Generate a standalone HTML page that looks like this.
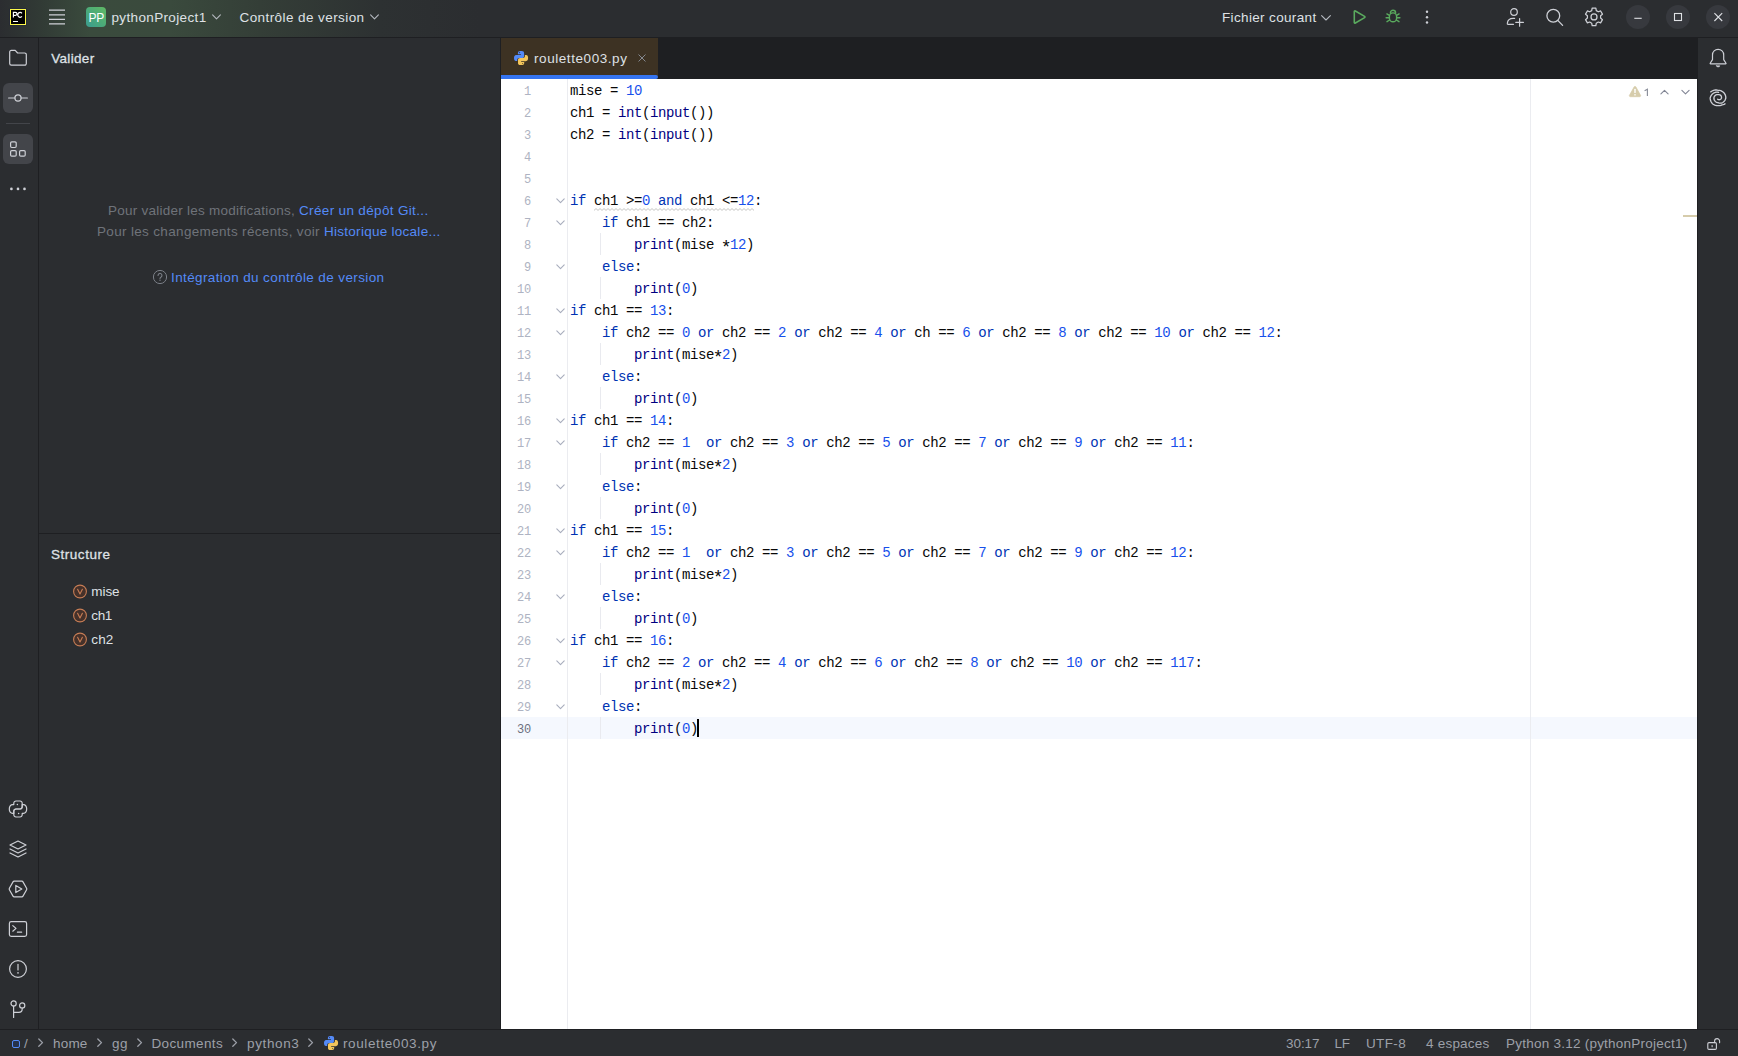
<!DOCTYPE html>
<html>
<head>
<meta charset="utf-8">
<title>pythonProject1 – roulette003.py</title>
<style>
*{box-sizing:border-box;margin:0;padding:0}
html,body{width:1738px;height:1056px;overflow:hidden;background:#2b2d30;font-family:"Liberation Sans",sans-serif}
body{font-family:"Liberation Sans",sans-serif;font-size:13px;color:#dfe1e5;position:relative}
svg{position:absolute;overflow:visible}
.tx{position:absolute;white-space:pre;line-height:16px;height:16px}
/* title bar */
#title{position:absolute;left:0;top:0;width:1738px;height:37px;background:linear-gradient(90deg,#2b2d30 0px,#313a35 40px,#3a4b3d 90px,#3a4a3d 170px,#343e37 260px,#2d3132 380px,#2b2d30 480px)}
#titleborder{position:absolute;left:0;top:37px;width:1738px;height:1px;background:#1e1f22}
/* left stripe */
#lstripe{position:absolute;left:0;top:38px;width:38px;height:991px;background:#2b2d30}
#lstripeborder{position:absolute;left:38px;top:38px;width:1px;height:991px;background:#1e1f22}
.sbtn{position:absolute;left:3px;width:30px;height:30px;border-radius:6px;background:#43454a}
/* left panel */
#lpanel{position:absolute;left:39px;top:38px;width:461px;height:991px;background:#2b2d30}
#lpanelborder{position:absolute;left:500px;top:38px;width:1px;height:991px;background:#1e1f22}
#lsplit{position:absolute;left:39px;top:533px;width:461px;height:1px;background:#1e1f22}
/* editor */
#tabbar{position:absolute;left:501px;top:38px;width:1196px;height:41px;background:#1e1f22}
#tab{position:absolute;left:501px;top:38px;width:157px;height:38px;background:#3d3223}
#tabline{position:absolute;left:501px;top:75px;width:157px;height:4px;background:#3574f0;border-radius:0 2px 2px 0}
#editor{position:absolute;left:501px;top:79px;width:1196px;height:950px;background:#ffffff}
#gutterline{position:absolute;left:567px;top:79px;width:1px;height:950px;background:#ebecf0}
#marginline{position:absolute;left:1530px;top:79px;width:1px;height:950px;background:#ebecf0}
#curline{position:absolute;left:501px;top:717px;width:1196px;height:22px;background:#f5f8fe}
#caret{position:absolute;left:697px;top:719px;width:2px;height:18px;background:#000}
.ln{position:absolute;left:501px;padding-top:2px;width:30px;text-align:right;font-family:"Liberation Mono",monospace;font-size:12px;letter-spacing:-0.2px;line-height:22px;height:22px;color:#aeb3c2;white-space:pre}
.cl{position:absolute;left:570px;font-family:"Liberation Mono",monospace;font-size:14px;letter-spacing:-0.4px;line-height:22px;height:22px;color:#080808;white-space:pre;padding-top:1px}
.as{position:relative;top:4px;font-size:18px;line-height:0;letter-spacing:0;margin:0 -1.4px}.k{color:#0033b3}.n{color:#1750eb}.b{color:#000080}
.ig{position:absolute;left:600px;width:1px;height:22px;background:#e9eaef}
/* right stripe */
#rstripe{position:absolute;left:1697px;top:38px;width:41px;height:991px;background:#2b2d30}
#rstripeborder{position:absolute;left:1697px;top:38px;width:1px;height:991px;background:#1e1f22}
/* status bar */
#status{position:absolute;left:0;top:1030px;width:1738px;height:26px;background:#2b2d30}
#statusborder{position:absolute;left:0;top:1029px;width:1738px;height:1px;background:#1e1f22}
</style>
</head>
<body>
<div id="title"></div>
<div id="titleborder"></div>
<div id="lstripe"></div>
<div id="lstripeborder"></div>
<div id="lpanel"></div>
<div id="lpanelborder"></div>
<div id="lsplit"></div>
<div id="tabbar"></div>
<div id="tab"></div>
<div id="tabline"></div>
<div id="editor"></div>
<div id="curline"></div>
<div id="gutterline"></div>
<div id="marginline"></div>
<div id="rstripe"></div>
<div id="rstripeborder"></div>
<div id="status"></div>
<div id="statusborder"></div>
<!-- title -->
<!-- PyCharm logo -->
<div style="position:absolute;left:10px;top:9px;width:16px;height:16px;background:#000;border:1px solid #fcf84a;box-shadow:0 0 0 0.5px #21253a"></div>
<svg style="left:10px;top:9px" width="16" height="16" viewBox="0 0 16 16" fill="none" stroke="#fff" stroke-width="1.15"><path d="M3.4 8.4 V3.3 H5.4 a1.55 1.55 0 0 1 0 3.1 H3.4"/><path d="M11.9 4.3 a2.3 2.5 0 1 0 0 3.1"/></svg>
<div style="position:absolute;left:13px;top:21px;width:5px;height:1px;background:#fff"></div>
<!-- hamburger -->
<svg style="left:49px;top:8px" width="16" height="18" viewBox="0 0 16 18"><path d="M0 2.2H16M0 6.8H16M0 11.3H16M0 15.8H16" stroke="#ced0d6" stroke-width="1.3" fill="none"/></svg>
<!-- project icon -->
<div style="position:absolute;left:86px;top:7px;width:20px;height:20px;border-radius:4px;background:linear-gradient(45deg,#3a9c90 0%,#4cab78 50%,#60b964 100%)"></div>
<!-- chevrons -->
<svg style="left:212px;top:14px" width="9" height="6" viewBox="0 0 9 6"><path d="M0.6 0.8 L4.5 4.8 L8.4 0.8" fill="none" stroke="#b4b8bf" stroke-width="1.1" stroke-linecap="round" stroke-linejoin="round"/></svg>
<svg style="left:370px;top:14px" width="9" height="6" viewBox="0 0 9 6"><path d="M0.6 0.8 L4.5 4.8 L8.4 0.8" fill="none" stroke="#b4b8bf" stroke-width="1.1" stroke-linecap="round" stroke-linejoin="round"/></svg>
<svg style="left:1321px;top:15px" width="10" height="6" viewBox="0 0 10 6"><path d="M0.6 0.6 L5 5 L9.4 0.6" fill="none" stroke="#b4b8bf" stroke-width="1.1" stroke-linecap="round" stroke-linejoin="round"/></svg>
<!-- run -->
<svg style="left:1351px;top:9px" width="16" height="16" viewBox="0 0 16 16"><path d="M3.3 2.6 V13.4 a0.7 0.7 0 0 0 1.05 .6 L13.6 8.6 a0.7 0.7 0 0 0 0 -1.2 L4.35 2 a0.7 0.7 0 0 0 -1.05 .6Z" fill="none" stroke="#5aaa5e" stroke-width="1.6" stroke-linejoin="round"/></svg>
<!-- debug -->
<svg style="left:1385px;top:8.3px" width="16" height="16" viewBox="0 0 16 16" fill="none" stroke="#5aaa5e" stroke-width="1.4" stroke-linecap="round" stroke-linejoin="round">
<path d="M5.4 4.9 a2.6 2.6 0 0 1 5.2 0"/>
<rect x="4.4" y="4.9" width="7.2" height="8.9" rx="3.6"/>
<path d="M4.4 7.4 L1.9 5.9M4.4 9.7H1.1M4.6 12 L2 13.7M11.6 7.4 L14.1 5.9M11.6 9.7H14.9M11.4 12 L14 13.7"/>
</svg>
<!-- kebab -->
<svg style="left:1425px;top:10px" width="4" height="14" viewBox="0 0 4 14"><circle cx="2" cy="1.8" r="1.2" fill="#ced0d6"/><circle cx="2" cy="7.2" r="1.2" fill="#ced0d6"/><circle cx="2" cy="12.5" r="1.2" fill="#ced0d6"/></svg>
<!-- add user -->
<svg style="left:1505px;top:7px" width="20" height="20" viewBox="0 0 20 20" fill="none" stroke="#ced0d6" stroke-width="1.2" stroke-linecap="round" stroke-linejoin="round">
<circle cx="9" cy="5" r="3.3"/>
<path d="M9.6 11.4 H8.2 C4.8 11.4 2.6 13.6 2.3 16.4 C2.2 17 2.5 17.3 3 17.3 H8.5"/>
<path d="M14.6 11.6V19.2M10.8 15.4H18.4"/>
</svg>
<!-- search -->
<svg style="left:1544px;top:7px" width="20" height="20" viewBox="0 0 20 20" fill="none" stroke="#ced0d6" stroke-width="1.3" stroke-linecap="round"><circle cx="9.3" cy="8.7" r="6.4"/><path d="M14 13.6 L18.6 18.4"/></svg>
<!-- gear -->
<svg style="left:1584px;top:7px" width="20" height="20" viewBox="0 0 20 20" fill="none" stroke="#ced0d6" stroke-width="1.25" stroke-linejoin="round"><path d="M7.71 3.60 L8.15 1.19 L11.85 1.19 L12.29 3.60 L14.31 4.77 L16.61 3.94 L18.46 7.15 L16.60 8.74 L16.60 11.06 L18.46 12.65 L16.61 15.86 L14.31 15.03 L12.29 16.20 L11.85 18.61 L8.15 18.61 L7.71 16.20 L5.69 15.03 L3.39 15.86 L1.54 12.65 L3.40 11.06 L3.40 8.74 L1.54 7.15 L3.39 3.94 L5.69 4.77Z"/><circle cx="10" cy="9.9" r="3"/></svg>
<!-- window buttons -->
<div style="position:absolute;left:1626px;top:5px;width:24px;height:24px;border-radius:12px;background:#37393e"></div>
<div style="position:absolute;left:1666px;top:5px;width:24px;height:24px;border-radius:12px;background:#37393e"></div>
<div style="position:absolute;left:1706px;top:5px;width:24px;height:24px;border-radius:12px;background:#37393e"></div>
<svg style="left:1626px;top:5px" width="24" height="24" viewBox="0 0 24 24"><path d="M8.3 13.3H15.7" stroke="#dfe1e5" stroke-width="1.1"/></svg>
<svg style="left:1666px;top:5px" width="24" height="24" viewBox="0 0 24 24"><rect x="8.5" y="8.5" width="7" height="7" fill="none" stroke="#dfe1e5" stroke-width="1.1"/></svg>
<svg style="left:1706px;top:5px" width="24" height="24" viewBox="0 0 24 24"><path d="M8.4 8.2 L16.2 16 M16.2 8.2 L8.4 16" stroke="#dfe1e5" stroke-width="1.1"/></svg>
<!-- lstripe -->
<!-- folder -->
<svg style="left:9px;top:49px" width="18" height="18" viewBox="0 0 18 18" fill="none" stroke="#ced0d6" stroke-width="1.2" stroke-linejoin="round"><path d="M0.7 3 a1.6 1.6 0 0 1 1.6 -1.6 H6.2 L8.6 4 H15.7 a1.6 1.6 0 0 1 1.6 1.6 V14.6 a1.6 1.6 0 0 1 -1.6 1.6 H2.3 a1.6 1.6 0 0 1 -1.6 -1.6Z"/></svg>
<!-- commit (selected) -->
<div class="sbtn" style="top:83px"></div>
<svg style="left:8px;top:90px" width="20" height="16" viewBox="0 0 20 16" fill="none" stroke="#ced0d6" stroke-width="1.2" stroke-linecap="round"><circle cx="10" cy="8" r="3.1"/><path d="M0.6 8H6.9M13.1 8H19.4"/></svg>
<div style="position:absolute;left:6px;top:123px;width:24px;height:1px;background:#43454a"></div>
<!-- structure (selected) -->
<div class="sbtn" style="top:134px"></div>
<svg style="left:9px;top:140px" width="18" height="18" viewBox="0 0 18 18" fill="none" stroke="#ced0d6" stroke-width="1.2" stroke-linejoin="round"><rect x="1.6" y="1.9" width="5.6" height="5.6" rx="1.2"/><rect x="1.6" y="10.6" width="5.6" height="5.6" rx="1.2"/><rect x="10.6" y="10.6" width="5.6" height="5.6" rx="1.2"/></svg>
<!-- more -->
<svg style="left:9px;top:186px" width="18" height="6" viewBox="0 0 18 6"><circle cx="2.4" cy="2.9" r="1.35" fill="#ced0d6"/><circle cx="9" cy="2.9" r="1.35" fill="#ced0d6"/><circle cx="15.5" cy="2.9" r="1.35" fill="#ced0d6"/></svg>
<!-- python console -->
<svg style="left:8px;top:799px" width="20" height="20" viewBox="0 0 20 20" fill="none" stroke="#ced0d6" stroke-width="1.2" stroke-linecap="round" stroke-linejoin="round">
<path d="M5.8 5.6 V4.2 A2.2 2.2 0 0 1 8 2 H12 A2.2 2.2 0 0 1 14.2 4.2 V7.8 A2.2 2.2 0 0 1 12 10 H8 A2.2 2.2 0 0 0 5.8 12.2 V14.4 H4.6 C2.6 14.4 1.3 12.7 1.3 10 C1.3 7.3 2.6 5.6 4.6 5.6Z"/><path d="M5.8 5.6 V4.2 A2.2 2.2 0 0 1 8 2 H12 A2.2 2.2 0 0 1 14.2 4.2 V7.8 A2.2 2.2 0 0 1 12 10 H8 A2.2 2.2 0 0 0 5.8 12.2 V14.4 H4.6 C2.6 14.4 1.3 12.7 1.3 10 C1.3 7.3 2.6 5.6 4.6 5.6Z" transform="rotate(180 10 10)"/>
<circle cx="9.4" cy="5.4" r="0.75" fill="#ced0d6" stroke="none"/><circle cx="10.6" cy="14.6" r="0.75" fill="#ced0d6" stroke="none"/>
</svg>
<!-- layers (packages) -->
<svg style="left:8px;top:839px" width="20" height="20" viewBox="0 0 20 20" fill="none" stroke="#ced0d6" stroke-width="1.2" stroke-linejoin="round" stroke-linecap="round">
<path d="M10 2 L18 6 L10 10 L2 6Z"/><path d="M2 10 L10 14 L18 10"/><path d="M2 14 L10 18 L18 14"/>
</svg>
<!-- services -->
<svg style="left:8px;top:879px" width="20" height="20" viewBox="0 0 20 20" fill="none" stroke="#ced0d6" stroke-width="1.2" stroke-linejoin="round">
<path d="M6.2 2.2 H13.8 a1.4 1.4 0 0 1 1.2 .7 L18.6 9.3 a1.4 1.4 0 0 1 0 1.4 L15 17.1 a1.4 1.4 0 0 1 -1.2 .7 H6.2 a1.4 1.4 0 0 1 -1.2 -.7 L1.4 10.7 a1.4 1.4 0 0 1 0 -1.4 L5 2.9 a1.4 1.4 0 0 1 1.2 -.7Z"/>
<path d="M7.8 6.4 V13.6 L13.8 10Z"/>
</svg>
<!-- terminal -->
<svg style="left:8px;top:919px" width="20" height="20" viewBox="0 0 20 20" fill="none" stroke="#ced0d6" stroke-width="1.2" stroke-linejoin="round" stroke-linecap="round">
<rect x="1.4" y="2.6" width="17.2" height="14.8" rx="1.8"/><path d="M4.8 6.6 L8 9.4 L4.8 12.2"/><path d="M9.4 13.2H13.6"/>
</svg>
<!-- problems -->
<svg style="left:8px;top:959px" width="20" height="20" viewBox="0 0 20 20" fill="none" stroke="#ced0d6" stroke-width="1.2" stroke-linecap="round">
<circle cx="10" cy="10" r="8.4"/><path d="M10 5.4V11"/><circle cx="10" cy="13.9" r="0.8" fill="#ced0d6" stroke="none"/>
</svg>
<!-- git -->
<svg style="left:8px;top:998px" width="20" height="22" viewBox="0 0 20 22" fill="none" stroke="#ced0d6" stroke-width="1.2" stroke-linecap="round">
<circle cx="5.6" cy="5.5" r="2.6"/><circle cx="14.2" cy="7.4" r="2.6"/><path d="M5.6 8.1V19.4"/><path d="M14.2 10 V11 a3.4 3.4 0 0 1 -3.4 3.4 H5.6"/>
</svg>
<!-- lpanel -->
<!-- help icon -->
<svg style="left:152px;top:269px" width="16" height="16" viewBox="0 0 16 16" fill="none"><circle cx="8" cy="8" r="6.6" stroke="#7b7f87" stroke-width="1"/><path d="M6.05 6.4 A1.95 1.95 0 1 1 9.15 7.95 C8.4 8.45 8 8.8 8 9.6" stroke="#7b7f87" stroke-width="1.1" stroke-linecap="round"/><circle cx="8" cy="11.2" r="0.7" fill="#7b7f87"/></svg>
<!-- structure items -->
<svg style="left:72px;top:583.5px" width="16" height="16" viewBox="0 0 16 16" fill="none"><circle cx="8" cy="7.5" r="6.4" stroke="#c77d55" stroke-width="1.1" fill="#45312a"/><path d="M5.6 5.2 L8 10 L10.4 5.2" stroke="#c77d55" stroke-width="1.1" stroke-linecap="round" stroke-linejoin="round"/></svg>
<svg style="left:72px;top:607.5px" width="16" height="16" viewBox="0 0 16 16" fill="none"><circle cx="8" cy="7.5" r="6.4" stroke="#c77d55" stroke-width="1.1" fill="#45312a"/><path d="M5.6 5.2 L8 10 L10.4 5.2" stroke="#c77d55" stroke-width="1.1" stroke-linecap="round" stroke-linejoin="round"/></svg>
<svg style="left:72px;top:631.5px" width="16" height="16" viewBox="0 0 16 16" fill="none"><circle cx="8" cy="7.5" r="6.4" stroke="#c77d55" stroke-width="1.1" fill="#45312a"/><path d="M5.6 5.2 L8 10 L10.4 5.2" stroke="#c77d55" stroke-width="1.1" stroke-linecap="round" stroke-linejoin="round"/></svg>
<!-- tab -->
<svg style="left:514px;top:51px" width="14.1" height="14.1" viewBox="0 0 14.1 14.1"><path d="M3.9 2.2 C3.9 0.8 4.7 0 6.2 0 H7.9 C9.3 0 10.1 0.8 10.1 2.2 V5 C10.1 6.3 9.3 7.05 8 7.05 H5.2 C3.9 7.05 3.2 7.8 3.2 9 V10 H2 C0.7 10 0 8.8 0 7 C0 5.2 0.7 3.9 2.2 3.9 H6.95 V3.2 H3.9Z" fill="#548af7"/>
<circle cx="5.5" cy="1.55" r="0.6" fill="#2a3a66"/>
<path transform="rotate(180 7.05 7.05)" d="M3.9 2.2 C3.9 0.8 4.7 0 6.2 0 H7.9 C9.3 0 10.1 0.8 10.1 2.2 V5 C10.1 6.3 9.3 7.05 8 7.05 H5.2 C3.9 7.05 3.2 7.8 3.2 9 V10 H2 C0.7 10 0 8.8 0 7 C0 5.2 0.7 3.9 2.2 3.9 H6.95 V3.2 H3.9Z" fill="#f2c55c"/>
<circle cx="8.6" cy="12.55" r="0.6" fill="#6e5a2a"/>
</svg>
<svg style="left:638px;top:54px" width="8" height="8" viewBox="0 0 8 8"><path d="M0.8 0.8 L7.2 7.2 M7.2 0.8 L0.8 7.2" stroke="#868a91" stroke-width="1" stroke-linecap="round"/></svg>
<!-- code -->
<div class="ln" style="top:79px">1</div>
<div class="cl" style="top:79px">mise = <span class="n">10</span></div>
<div class="ln" style="top:101px">2</div>
<div class="cl" style="top:101px">ch1 = <span class="b">int</span>(<span class="b">input</span>())</div>
<div class="ln" style="top:123px">3</div>
<div class="cl" style="top:123px">ch2 = <span class="b">int</span>(<span class="b">input</span>())</div>
<div class="ln" style="top:145px">4</div>
<div class="ln" style="top:167px">5</div>
<div class="ln" style="top:189px">6</div>
<div class="cl" style="top:189px"><span class="k">if</span> ch1 &gt;=<span class="n">0</span> <span class="k">and</span> ch1 &lt;=<span class="n">12</span>:</div>
<svg style="left:556px;top:197px" width="9" height="8" viewBox="0 0 9 8"><path d="M0.8 1.8 L4.5 5.6 L8.2 1.8" fill="none" stroke="#a8adbd" stroke-width="1.1" stroke-linecap="round" stroke-linejoin="round"/></svg>
<div class="ln" style="top:211px">7</div>
<div class="cl" style="top:211px">    <span class="k">if</span> ch1 == ch2:</div>
<svg style="left:556px;top:219px" width="9" height="8" viewBox="0 0 9 8"><path d="M0.8 1.8 L4.5 5.6 L8.2 1.8" fill="none" stroke="#a8adbd" stroke-width="1.1" stroke-linecap="round" stroke-linejoin="round"/></svg>
<div class="ln" style="top:233px">8</div>
<div class="cl" style="top:233px">        <span class="b">print</span>(mise <span class="as">*</span><span class="n">12</span>)</div>
<div class="ig" style="top:233px"></div>
<div class="ln" style="top:255px">9</div>
<div class="cl" style="top:255px">    <span class="k">else</span>:</div>
<svg style="left:556px;top:263px" width="9" height="8" viewBox="0 0 9 8"><path d="M0.8 1.8 L4.5 5.6 L8.2 1.8" fill="none" stroke="#a8adbd" stroke-width="1.1" stroke-linecap="round" stroke-linejoin="round"/></svg>
<div class="ln" style="top:277px">10</div>
<div class="cl" style="top:277px">        <span class="b">print</span>(<span class="n">0</span>)</div>
<div class="ig" style="top:277px"></div>
<div class="ln" style="top:299px">11</div>
<div class="cl" style="top:299px"><span class="k">if</span> ch1 == <span class="n">13</span>:</div>
<svg style="left:556px;top:307px" width="9" height="8" viewBox="0 0 9 8"><path d="M0.8 1.8 L4.5 5.6 L8.2 1.8" fill="none" stroke="#a8adbd" stroke-width="1.1" stroke-linecap="round" stroke-linejoin="round"/></svg>
<div class="ln" style="top:321px">12</div>
<div class="cl" style="top:321px">    <span class="k">if</span> ch2 == <span class="n">0</span> <span class="k">or</span> ch2 == <span class="n">2</span> <span class="k">or</span> ch2 == <span class="n">4</span> <span class="k">or</span> ch == <span class="n">6</span> <span class="k">or</span> ch2 == <span class="n">8</span> <span class="k">or</span> ch2 == <span class="n">10</span> <span class="k">or</span> ch2 == <span class="n">12</span>:</div>
<svg style="left:556px;top:329px" width="9" height="8" viewBox="0 0 9 8"><path d="M0.8 1.8 L4.5 5.6 L8.2 1.8" fill="none" stroke="#a8adbd" stroke-width="1.1" stroke-linecap="round" stroke-linejoin="round"/></svg>
<div class="ln" style="top:343px">13</div>
<div class="cl" style="top:343px">        <span class="b">print</span>(mise<span class="as">*</span><span class="n">2</span>)</div>
<div class="ig" style="top:343px"></div>
<div class="ln" style="top:365px">14</div>
<div class="cl" style="top:365px">    <span class="k">else</span>:</div>
<svg style="left:556px;top:373px" width="9" height="8" viewBox="0 0 9 8"><path d="M0.8 1.8 L4.5 5.6 L8.2 1.8" fill="none" stroke="#a8adbd" stroke-width="1.1" stroke-linecap="round" stroke-linejoin="round"/></svg>
<div class="ln" style="top:387px">15</div>
<div class="cl" style="top:387px">        <span class="b">print</span>(<span class="n">0</span>)</div>
<div class="ig" style="top:387px"></div>
<div class="ln" style="top:409px">16</div>
<div class="cl" style="top:409px"><span class="k">if</span> ch1 == <span class="n">14</span>:</div>
<svg style="left:556px;top:417px" width="9" height="8" viewBox="0 0 9 8"><path d="M0.8 1.8 L4.5 5.6 L8.2 1.8" fill="none" stroke="#a8adbd" stroke-width="1.1" stroke-linecap="round" stroke-linejoin="round"/></svg>
<div class="ln" style="top:431px">17</div>
<div class="cl" style="top:431px">    <span class="k">if</span> ch2 == <span class="n">1</span>  <span class="k">or</span> ch2 == <span class="n">3</span> <span class="k">or</span> ch2 == <span class="n">5</span> <span class="k">or</span> ch2 == <span class="n">7</span> <span class="k">or</span> ch2 == <span class="n">9</span> <span class="k">or</span> ch2 == <span class="n">11</span>:</div>
<svg style="left:556px;top:439px" width="9" height="8" viewBox="0 0 9 8"><path d="M0.8 1.8 L4.5 5.6 L8.2 1.8" fill="none" stroke="#a8adbd" stroke-width="1.1" stroke-linecap="round" stroke-linejoin="round"/></svg>
<div class="ln" style="top:453px">18</div>
<div class="cl" style="top:453px">        <span class="b">print</span>(mise<span class="as">*</span><span class="n">2</span>)</div>
<div class="ig" style="top:453px"></div>
<div class="ln" style="top:475px">19</div>
<div class="cl" style="top:475px">    <span class="k">else</span>:</div>
<svg style="left:556px;top:483px" width="9" height="8" viewBox="0 0 9 8"><path d="M0.8 1.8 L4.5 5.6 L8.2 1.8" fill="none" stroke="#a8adbd" stroke-width="1.1" stroke-linecap="round" stroke-linejoin="round"/></svg>
<div class="ln" style="top:497px">20</div>
<div class="cl" style="top:497px">        <span class="b">print</span>(<span class="n">0</span>)</div>
<div class="ig" style="top:497px"></div>
<div class="ln" style="top:519px">21</div>
<div class="cl" style="top:519px"><span class="k">if</span> ch1 == <span class="n">15</span>:</div>
<svg style="left:556px;top:527px" width="9" height="8" viewBox="0 0 9 8"><path d="M0.8 1.8 L4.5 5.6 L8.2 1.8" fill="none" stroke="#a8adbd" stroke-width="1.1" stroke-linecap="round" stroke-linejoin="round"/></svg>
<div class="ln" style="top:541px">22</div>
<div class="cl" style="top:541px">    <span class="k">if</span> ch2 == <span class="n">1</span>  <span class="k">or</span> ch2 == <span class="n">3</span> <span class="k">or</span> ch2 == <span class="n">5</span> <span class="k">or</span> ch2 == <span class="n">7</span> <span class="k">or</span> ch2 == <span class="n">9</span> <span class="k">or</span> ch2 == <span class="n">12</span>:</div>
<svg style="left:556px;top:549px" width="9" height="8" viewBox="0 0 9 8"><path d="M0.8 1.8 L4.5 5.6 L8.2 1.8" fill="none" stroke="#a8adbd" stroke-width="1.1" stroke-linecap="round" stroke-linejoin="round"/></svg>
<div class="ln" style="top:563px">23</div>
<div class="cl" style="top:563px">        <span class="b">print</span>(mise<span class="as">*</span><span class="n">2</span>)</div>
<div class="ig" style="top:563px"></div>
<div class="ln" style="top:585px">24</div>
<div class="cl" style="top:585px">    <span class="k">else</span>:</div>
<svg style="left:556px;top:593px" width="9" height="8" viewBox="0 0 9 8"><path d="M0.8 1.8 L4.5 5.6 L8.2 1.8" fill="none" stroke="#a8adbd" stroke-width="1.1" stroke-linecap="round" stroke-linejoin="round"/></svg>
<div class="ln" style="top:607px">25</div>
<div class="cl" style="top:607px">        <span class="b">print</span>(<span class="n">0</span>)</div>
<div class="ig" style="top:607px"></div>
<div class="ln" style="top:629px">26</div>
<div class="cl" style="top:629px"><span class="k">if</span> ch1 == <span class="n">16</span>:</div>
<svg style="left:556px;top:637px" width="9" height="8" viewBox="0 0 9 8"><path d="M0.8 1.8 L4.5 5.6 L8.2 1.8" fill="none" stroke="#a8adbd" stroke-width="1.1" stroke-linecap="round" stroke-linejoin="round"/></svg>
<div class="ln" style="top:651px">27</div>
<div class="cl" style="top:651px">    <span class="k">if</span> ch2 == <span class="n">2</span> <span class="k">or</span> ch2 == <span class="n">4</span> <span class="k">or</span> ch2 == <span class="n">6</span> <span class="k">or</span> ch2 == <span class="n">8</span> <span class="k">or</span> ch2 == <span class="n">10</span> <span class="k">or</span> ch2 == <span class="n">117</span>:</div>
<svg style="left:556px;top:659px" width="9" height="8" viewBox="0 0 9 8"><path d="M0.8 1.8 L4.5 5.6 L8.2 1.8" fill="none" stroke="#a8adbd" stroke-width="1.1" stroke-linecap="round" stroke-linejoin="round"/></svg>
<div class="ln" style="top:673px">28</div>
<div class="cl" style="top:673px">        <span class="b">print</span>(mise<span class="as">*</span><span class="n">2</span>)</div>
<div class="ig" style="top:673px"></div>
<div class="ln" style="top:695px">29</div>
<div class="cl" style="top:695px">    <span class="k">else</span>:</div>
<svg style="left:556px;top:703px" width="9" height="8" viewBox="0 0 9 8"><path d="M0.8 1.8 L4.5 5.6 L8.2 1.8" fill="none" stroke="#a8adbd" stroke-width="1.1" stroke-linecap="round" stroke-linejoin="round"/></svg>
<div class="ln" style="top:717px;color:#6c707e">30</div>
<div class="cl" style="top:717px">        <span class="b">print</span>(<span class="n">0</span>)</div>
<div class="ig" style="top:717px"></div>
<svg style="left:0;top:0" width="1738" height="1056"><path d="M594 210.4 L596 208.6 L598 210.4 L600 208.6 L602 210.4 L604 208.6 L606 210.4 L608 208.6 L610 210.4 L612 208.6 L614 210.4 L616 208.6 L618 210.4 L620 208.6 L622 210.4 L624 208.6 L626 210.4 L628 208.6 L630 210.4 L632 208.6 L634 210.4 L636 208.6 L638 210.4 L640 208.6 L642 210.4 L644 208.6 L646 210.4 L648 208.6 L650 210.4 L652 208.6 L654 210.4 L656 208.6 L658 210.4 L660 208.6 L662 210.4 L664 208.6 L666 210.4 L668 208.6 L670 210.4 L672 208.6 L674 210.4 L676 208.6 L678 210.4 L680 208.6 L682 210.4 L684 208.6 L686 210.4 L688 208.6 L690 210.4 L692 208.6 L694 210.4 L696 208.6 L698 210.4 L700 208.6 L702 210.4 L704 208.6 L706 210.4 L708 208.6 L710 210.4 L712 208.6 L714 210.4 L716 208.6 L718 210.4 L720 208.6 L722 210.4 L724 208.6 L726 210.4 L728 208.6 L730 210.4 L732 208.6 L734 210.4 L736 208.6 L738 210.4 L740 208.6 L742 210.4 L744 208.6 L746 210.4 L748 208.6 L750 210.4 L752 208.6 L754 210.4" fill="none" stroke="#c2c2be" stroke-width="0.9"/></svg>
<div id="caret"></div>
<!-- right -->
<!-- bell -->
<svg style="left:1708px;top:48px" width="20" height="20" viewBox="0 0 20 20" fill="none" stroke="#ced0d6" stroke-width="1.2" stroke-linejoin="round" stroke-linecap="round"><path d="M4.5 11.6 V6.9 a5.6 5.6 0 0 1 11.2 0 V11.6 L18 15.2 a0.4 0.4 0 0 1 -.35 .6 H2.55 a0.4 0.4 0 0 1 -.35 -.6Z"/><path d="M8.4 17.7 H11.8 a1.7 1.3 0 0 1 -3.4 0Z" fill="#ced0d6" stroke-width="0.5"/></svg>
<!-- ai spiral -->
<svg style="left:1708px;top:88px" width="20" height="20" viewBox="0 0 20 20" fill="none" stroke="#ced0d6" stroke-width="1.35" stroke-linecap="round" stroke-linejoin="round"><path d="M2.75 3.83 L3.63 3.24 L4.55 2.76 L5.49 2.40 L6.44 2.16 L7.40 2.03 L8.33 2.02 L9.24 2.11 L10.10 2.30 L10.91 2.33 L11.71 2.45 L12.49 2.65 L13.25 2.93 L13.98 3.29 L14.66 3.72 L15.30 4.23 L15.88 4.79 L16.40 5.42 L16.85 6.10 L17.21 6.84 L17.48 7.60 L17.67 8.39 L17.78 9.19 L17.80 10.00 L17.58 10.82 L17.28 11.59 L16.89 12.31 L16.44 12.96 L15.93 13.54 L15.38 14.05 L14.78 14.48 L14.15 14.83 L13.42 15.04 L12.69 15.15 L11.98 15.17 L11.31 15.09 L10.68 14.93 L10.10 14.70 L9.59 14.62 L9.10 14.49 L8.64 14.31 L8.20 14.08 L7.79 13.80 L7.42 13.49 L7.09 13.14 L6.81 12.76 L6.52 12.35 L6.29 11.91 L6.11 11.45 L5.98 10.98 L5.91 10.49 L5.90 10.00 L5.97 9.57 L6.09 9.15 L6.25 8.75 L6.45 8.37 L6.68 8.02 L6.94 7.71 L7.24 7.42 L7.56 7.18 L7.90 6.97 L8.25 6.80 L8.62 6.67 L8.99 6.60 L9.37 6.56 L9.74 6.56 L10.10 6.60 L10.47 6.58 L10.85 6.61 L11.23 6.67 L11.60 6.78 L11.96 6.93 L12.31 7.12 L12.63 7.35 L12.93 7.62 L13.15 7.99 L13.32 8.38 L13.44 8.79 L13.51 9.19 L13.53 9.60 L13.50 10.00 L13.31 10.38 L13.08 10.71 L12.83 10.99 L12.54 11.23 L12.24 11.41 L11.94 11.54 L11.66 11.65 L11.37 11.71 L11.10 11.73 L10.84 11.71 L10.60 11.66 L10.38 11.58 L10.21 11.54 L10.05 11.48 L9.90 11.41 L9.77 11.32 L9.66 11.22"/><path d="M10.59 4.42 L9.97 4.26 L9.33 4.18 L8.67 4.16 L8.00 4.22 L7.32 4.36 L6.65 4.58 L5.99 4.88 L5.36 5.26 L4.73 5.72 L4.14 6.25 L3.60 6.87 L3.13 7.56 L2.73 8.32 L2.42 9.13 L2.20 10.00 L2.24 10.89 L2.37 11.76 L2.60 12.62 L2.93 13.45 L3.35 14.24 L3.86 14.98 L4.44 15.66 L5.15 16.21 L5.90 16.68 L6.70 17.05 L7.53 17.34 L8.38 17.52 L9.24 17.61 L10.10 17.60 L10.90 17.64 L11.71 17.59 L12.52 17.46 L13.32 17.24 L14.10 16.93 L15.08 16.68 L16.05 16.30 L16.99 15.79"/></svg>
<!-- inspection widget -->
<svg style="left:1628px;top:85px" width="14" height="13" viewBox="0 0 14 13"><path transform="translate(7 7) scale(0.92) translate(-7 -7)" d="M7 0.9 a1 1 0 0 1 .9 .5 L13 10.6 a1 1 0 0 1 -.9 1.5 H1.9 a1 1 0 0 1 -.9 -1.5 L6.1 1.4 a1 1 0 0 1 .9 -.5Z" fill="#d6ccab" stroke="#d6ccab" stroke-width="0.8" stroke-linejoin="round"/><rect x="6.3" y="3.8" width="1.4" height="4.2" rx="0.5" fill="#fff"/><rect x="6.3" y="9" width="1.4" height="1.5" rx="0.5" fill="#fff"/></svg>
<svg style="left:1660px;top:89px" width="9" height="6" viewBox="0 0 9 6"><path d="M0.9 4.9 L4.5 1.4 L8.1 4.9" fill="none" stroke="#818594" stroke-width="1.1" stroke-linecap="round" stroke-linejoin="round"/></svg>
<svg style="left:1681px;top:89px" width="9" height="6" viewBox="0 0 9 6"><path d="M0.9 1.3 L4.5 4.8 L8.1 1.3" fill="none" stroke="#818594" stroke-width="1.1" stroke-linecap="round" stroke-linejoin="round"/></svg>
<!-- error stripe mark -->
<div style="position:absolute;left:1683px;top:215px;width:14px;height:2px;background:#d6ccab"></div>
<svg style="left:1643px;top:87px" width="7" height="10" viewBox="0 0 7 10"><path d="M1.6 3.7 L4.4 2.2 V9" fill="none" stroke="#8a8e9a" stroke-width="1.15" stroke-linejoin="miter"/></svg>
<!-- status -->
<div style="position:absolute;left:12px;top:1040px;width:8px;height:8px;border:1.2px solid #548af7;border-radius:2px;background:#25324d"></div>
<svg style="left:38px;top:1037.9px" width="6" height="9" viewBox="0 0 6 9"><path d="M0.8 1 L4.5 4.6 L0.8 8.2" fill="none" stroke="#9da0a8" stroke-width="1.3" stroke-linecap="round" stroke-linejoin="round"/></svg>
<svg style="left:97px;top:1037.9px" width="6" height="9" viewBox="0 0 6 9"><path d="M0.8 1 L4.5 4.6 L0.8 8.2" fill="none" stroke="#9da0a8" stroke-width="1.3" stroke-linecap="round" stroke-linejoin="round"/></svg>
<svg style="left:137px;top:1037.9px" width="6" height="9" viewBox="0 0 6 9"><path d="M0.8 1 L4.5 4.6 L0.8 8.2" fill="none" stroke="#9da0a8" stroke-width="1.3" stroke-linecap="round" stroke-linejoin="round"/></svg>
<svg style="left:232px;top:1037.9px" width="6" height="9" viewBox="0 0 6 9"><path d="M0.8 1 L4.5 4.6 L0.8 8.2" fill="none" stroke="#9da0a8" stroke-width="1.3" stroke-linecap="round" stroke-linejoin="round"/></svg>
<svg style="left:308px;top:1037.9px" width="6" height="9" viewBox="0 0 6 9"><path d="M0.8 1 L4.5 4.6 L0.8 8.2" fill="none" stroke="#9da0a8" stroke-width="1.3" stroke-linecap="round" stroke-linejoin="round"/></svg>
<svg style="left:324px;top:1036px" width="14.1" height="14.1" viewBox="0 0 14.1 14.1"><path d="M3.9 2.2 C3.9 0.8 4.7 0 6.2 0 H7.9 C9.3 0 10.1 0.8 10.1 2.2 V5 C10.1 6.3 9.3 7.05 8 7.05 H5.2 C3.9 7.05 3.2 7.8 3.2 9 V10 H2 C0.7 10 0 8.8 0 7 C0 5.2 0.7 3.9 2.2 3.9 H6.95 V3.2 H3.9Z" fill="#548af7"/>
<circle cx="5.5" cy="1.55" r="0.6" fill="#2a3a66"/>
<path transform="rotate(180 7.05 7.05)" d="M3.9 2.2 C3.9 0.8 4.7 0 6.2 0 H7.9 C9.3 0 10.1 0.8 10.1 2.2 V5 C10.1 6.3 9.3 7.05 8 7.05 H5.2 C3.9 7.05 3.2 7.8 3.2 9 V10 H2 C0.7 10 0 8.8 0 7 C0 5.2 0.7 3.9 2.2 3.9 H6.95 V3.2 H3.9Z" fill="#f2c55c"/>
<circle cx="8.6" cy="12.55" r="0.6" fill="#6e5a2a"/>
</svg>
<!-- lock -->
<svg style="left:1707px;top:1037px" width="14" height="14" viewBox="0 0 14 14" fill="none" stroke="#ced0d6" stroke-width="1.1" stroke-linecap="round" stroke-linejoin="round"><rect x="0.8" y="5.6" width="8.6" height="6.8" rx="1.2"/><path d="M7.6 5.6 V4.1 a2.5 2.5 0 0 1 5 0 V5.7"/><rect x="4.5" y="7.9" width="1.3" height="2.4" rx="0.6" fill="#aeb1b8" stroke="none"/></svg>
<!-- texts -->
<div class="tx" id="t_proj" style="left:111.5px;top:10.00px;font-size:13.5px;color:#dfe1e5;letter-spacing:0.353px;">pythonProject1</div>
<div class="tx" id="t_vcs" style="left:239.5px;top:10.00px;font-size:13.5px;color:#dfe1e5;letter-spacing:0.417px;">Contrôle de version</div>
<div class="tx" id="t_run" style="left:1222px;top:10.00px;font-size:13.5px;color:#dfe1e5;letter-spacing:0.347px;">Fichier courant</div>
<div class="tx" id="t_pp" style="left:88.5px;top:10.00px;font-size:12px;color:#ffffff;letter-spacing:-0.258px;">PP</div>
<div class="tx" id="t_valider" style="left:51.2px;top:51.00px;font-size:13.5px;color:#dfe1e5;letter-spacing:0.324px;-webkit-text-stroke:0.3px #dfe1e5;">Valider</div>
<div class="tx" id="t_l1a" style="left:108px;top:203.00px;font-size:13.5px;color:#6f737a;letter-spacing:0.247px;">Pour valider les modifications, </div>
<div class="tx" id="t_l1b" style="left:299px;top:203.00px;font-size:13.5px;color:#548af7;letter-spacing:0.342px;">Créer un dépôt Git...</div>
<div class="tx" id="t_l2a" style="left:97px;top:224.00px;font-size:13.5px;color:#6f737a;letter-spacing:0.333px;">Pour les changements récents, voir </div>
<div class="tx" id="t_l2b" style="left:324px;top:224.00px;font-size:13.5px;color:#548af7;letter-spacing:0.272px;">Historique locale...</div>
<div class="tx" id="t_l3" style="left:171px;top:270.00px;font-size:13.5px;color:#548af7;letter-spacing:0.386px;">Intégration du contrôle de version</div>
<div class="tx" id="t_struct" style="left:51px;top:547.00px;font-size:13.5px;color:#dfe1e5;letter-spacing:0.524px;-webkit-text-stroke:0.3px #dfe1e5;">Structure</div>
<div class="tx" id="t_mise" style="left:91.3px;top:584.00px;font-size:13.5px;color:#dfe1e5;letter-spacing:-0.079px;">mise</div>
<div class="tx" id="t_ch1" style="left:91.3px;top:608.00px;font-size:13.5px;color:#dfe1e5;letter-spacing:-0.360px;">ch1</div>
<div class="tx" id="t_ch2" style="left:91.3px;top:632.00px;font-size:13.5px;color:#dfe1e5;letter-spacing:0.140px;">ch2</div>
<div class="tx" id="t_tab" style="left:534px;top:51.00px;font-size:13.5px;color:#dfe1e5;letter-spacing:0.567px;">roulette003.py</div>
<div class="tx" id="s_slash" style="left:24px;top:1036.00px;font-size:13.5px;color:#9da0a8;letter-spacing:1.234px;">/</div>
<div class="tx" id="s_home" style="left:53px;top:1036.00px;font-size:13.5px;color:#9da0a8;letter-spacing:0.180px;">home</div>
<div class="tx" id="s_gg" style="left:112px;top:1036.00px;font-size:13.5px;color:#9da0a8;letter-spacing:0.484px;">gg</div>
<div class="tx" id="s_doc" style="left:151.5px;top:1036.00px;font-size:13.5px;color:#9da0a8;letter-spacing:0.358px;">Documents</div>
<div class="tx" id="s_py3" style="left:247px;top:1036.00px;font-size:13.5px;color:#9da0a8;letter-spacing:0.636px;">python3</div>
<div class="tx" id="s_file" style="left:343px;top:1036.00px;font-size:13.5px;color:#9da0a8;letter-spacing:0.603px;">roulette003.py</div>
<div class="tx" id="s_pos" style="left:1286px;top:1036.00px;font-size:13.5px;color:#9da0a8;letter-spacing:-0.059px;">30:17</div>
<div class="tx" id="s_lf" style="left:1334.5px;top:1036.00px;font-size:13.5px;color:#9da0a8;letter-spacing:-0.383px;">LF</div>
<div class="tx" id="s_utf" style="left:1366px;top:1036.00px;font-size:13.5px;color:#9da0a8;letter-spacing:0.350px;">UTF-8</div>
<div class="tx" id="s_sp" style="left:1426px;top:1036.00px;font-size:13.5px;color:#9da0a8;letter-spacing:0.217px;">4 espaces</div>
<div class="tx" id="s_interp" style="left:1506px;top:1036.00px;font-size:13.5px;color:#9da0a8;letter-spacing:0.237px;">Python 3.12 (pythonProject1)</div>
</body>
</html>
